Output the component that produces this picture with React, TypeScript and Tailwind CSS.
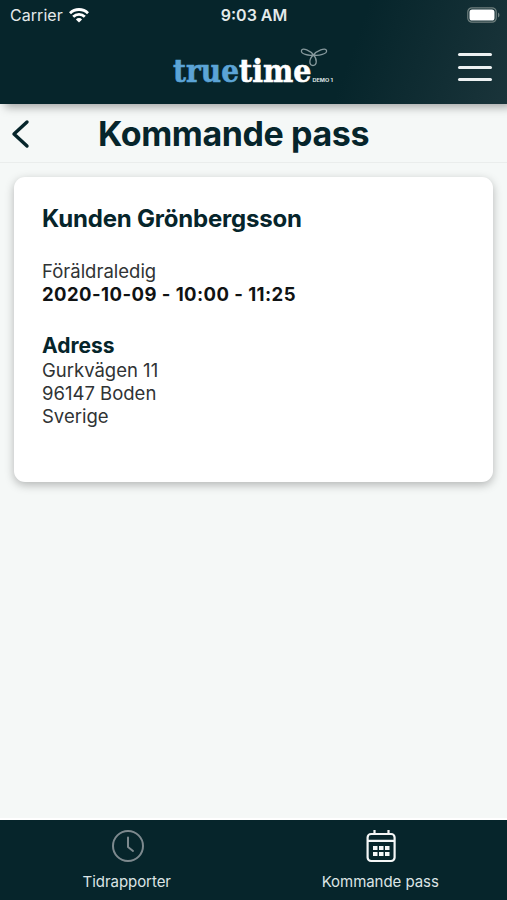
import type { ReactNode } from 'react';

interface Shift {
  customer: string;
  type: string;
  time: string;
  address: string[];
}

const shift: Shift = {
  customer: 'Kunden Grönbergsson',
  type: 'Föräldraledig',
  time: '2020-10-09 - 10:00 - 11:25',
  address: ['Gurkvägen 11', '96147 Boden', 'Sverige'],
};

function StatusBar() {
  return (
    <div className="grid h-[30px] grid-cols-3 items-center pl-[10px] pr-[7px] text-[16px] text-[#e4eaeb]">
      <div className="flex items-center gap-[6px]">
        <span className="tracking-[0.05px]">Carrier</span>
        <svg width="20" height="15" viewBox="0 0 20 15" fill="none" stroke="#fff" strokeWidth="2.8">
          <path d="M1 5.2a12.8 12.8 0 0 1 18 0" />
          <path d="M4.2 8.8a8.2 8.2 0 0 1 11.6 0" />
          <path d="M10 14.6 6.9 11.4a4.4 4.4 0 0 1 6.2 0z" fill="#fff" stroke="none" />
        </svg>
      </div>
      <span className="-ml-[2px] text-center font-semibold">9:03 AM</span>
      <svg className="justify-self-end" width="33" height="16" viewBox="0 0 33 16">
        <rect x="0.8" y="0.8" width="28.4" height="14.4" rx="4.2" fill="none" stroke="#71807f" strokeWidth="1.2" />
        <rect x="2.5" y="2.5" width="25" height="11" rx="2.6" fill="#fff" />
        <path d="M31 5.5v5q1.5-.8 1.5-2.5T31 5.5z" fill="#71807f" />
      </svg>
    </div>
  );
}

function Logo() {
  return (
    <svg width="166" height="44" viewBox="0 0 166 44">
      <g fontFamily="'DejaVu Serif', serif" fontWeight="700" fontSize="32" strokeWidth="0.6">
        <text x="3" y="36.7" textLength="66" lengthAdjust="spacingAndGlyphs" fill="#5ba4d6" stroke="#5ba4d6">
          true
        </text>
        <text x="69" y="36.7" textLength="72.5" lengthAdjust="spacingAndGlyphs" fill="#fff" stroke="#fff">
          time
        </text>
      </g>
      <g fill="none" stroke="#87999d" strokeWidth="1.3">
        <path d="M143.5 10c-3-4-11-8-12-4.5s7 5.500 12 4.500z" />
        <path d="M143.500 10c3-4 12-8 13-4.500s-8 5.500-13 4.500z" />
        <path d="M143.500 10c-5 4-4.500 10.500-.5 10.500s4.500-6.500.5-10.500z" />
      </g>
      <text x="142.500" y="37" textLength="20.500" lengthAdjust="spacingAndGlyphs" fill="#dfe5e6" fontFamily="Inter, sans-serif" fontWeight="700" fontSize="4.5">
        DEMO 1
      </text>
    </svg>
  );
}

function Header() {
  return (
    <header className="relative z-10 h-[104px] bg-[linear-gradient(110deg,#06252b_68%,#1a343a_100%)] shadow-[5px_3px_9px_rgba(0,0,0,0.35)]">
      <StatusBar />
      <div className="grid h-[74px] grid-cols-[1fr_166px_1fr] pr-[15px]">
        <div />
        <div className="pl-[7px] pt-[15px]">
          <Logo />
        </div>
        <button className="mt-[23px] flex h-[28px] w-[34px] flex-col justify-between justify-self-end" aria-label="Meny">
          <span className="h-[3px] w-full rounded-full bg-[#edf1f2]" />
          <span className="h-[3px] w-full rounded-full bg-[#edf1f2]" />
          <span className="h-[3px] w-full rounded-full bg-[#edf1f2]" />
        </button>
      </div>
    </header>
  );
}

function ShiftCard({ shift }: { shift: Shift }) {
  return (
    <article className="mx-[14px] mt-[14px] h-[305px] rounded-[11px] bg-white px-7 pt-[27px] text-[18.5px] leading-[23px] text-[#303334] shadow-[0_3px_10px_rgba(0,0,0,0.27)]">
      <h2 className="text-[24px] font-bold leading-[30px] tracking-[-0.2px] text-[#06252b]">{shift.customer}</h2>
      <p className="mt-[26px]">{shift.type}</p>
      <p className="font-bold tracking-[0.44px] text-[#101314]">{shift.time}</p>
      <h3 className="mt-[27px] text-[21px] font-bold leading-[26px] text-[#06252b]">Adress</h3>
      {shift.address.map((line) => (
        <p key={line}>{line}</p>
      ))}
    </article>
  );
}

function Tab({ label, children }: { label: string; children: ReactNode }) {
  return (
    <button className="flex flex-col items-center pt-[9px] text-[15px] leading-5 text-[#dce4e5]">
      {children}
      <span className="mt-2 tracking-[-0.05px]">{label}</span>
    </button>
  );
}

function TabBar() {
  return (
    <nav className="grid h-[80px] grid-cols-2 bg-[#06252b] shadow-[0_-2px_0_#fff]">
      <Tab label="Tidrapporter">
        <svg width="34" height="35" viewBox="0 0 34 35" fill="none" stroke="#7d898e" strokeWidth="2" strokeLinecap="round" strokeLinejoin="round">
          <circle cx="18" cy="17" r="15" />
          <path d="M18 8.5V18l5 4" />
        </svg>
      </Tab>
      <Tab label="Kommande pass">
        <svg width="34" height="35" viewBox="0 0 34 35" fill="none" stroke="#f4f7f7" strokeWidth="2.2">
          <rect x="4.6" y="5" width="27" height="27" rx="3.5" />
          <path d="M5 11.8h26M11.5 1v4M25.5 1v4" />
          <g fill="#f4f7f7" stroke="none">
            <path d="M10 17h4.5v4H10zM16 17h4.5v4H16zM22 17h4.5v4H22z" />
            <path d="M10 23h4.5v4H10zM16 23h4.5v4H16zM22 23h4.5v4H22z" />
          </g>
        </svg>
      </Tab>
    </nav>
  );
}

export default function App() {
  return (
    <div className="flex h-screen w-full flex-col overflow-hidden bg-[#f5f8f7] font-['Inter',sans-serif]">
      <Header />
      <div className="flex h-[59px] items-center border-b border-[#eaedec]">
        <button className="w-[98px] pl-[11px] pt-px" aria-label="Tillbaka">
          <svg width="20" height="30" viewBox="0 0 20 30" fill="none" stroke="#06252b" strokeWidth="3.4" strokeLinecap="round" strokeLinejoin="round">
            <path d="M16 3 3 15l13 12" />
          </svg>
        </button>
        <h1 className="pt-[2px] text-[34px] font-bold leading-[40px] tracking-[-0.4px] text-[#06252b]">Kommande pass</h1>
      </div>
      <main className="flex-1">
        <ShiftCard shift={shift} />
      </main>
      <TabBar />
    </div>
  );
}
